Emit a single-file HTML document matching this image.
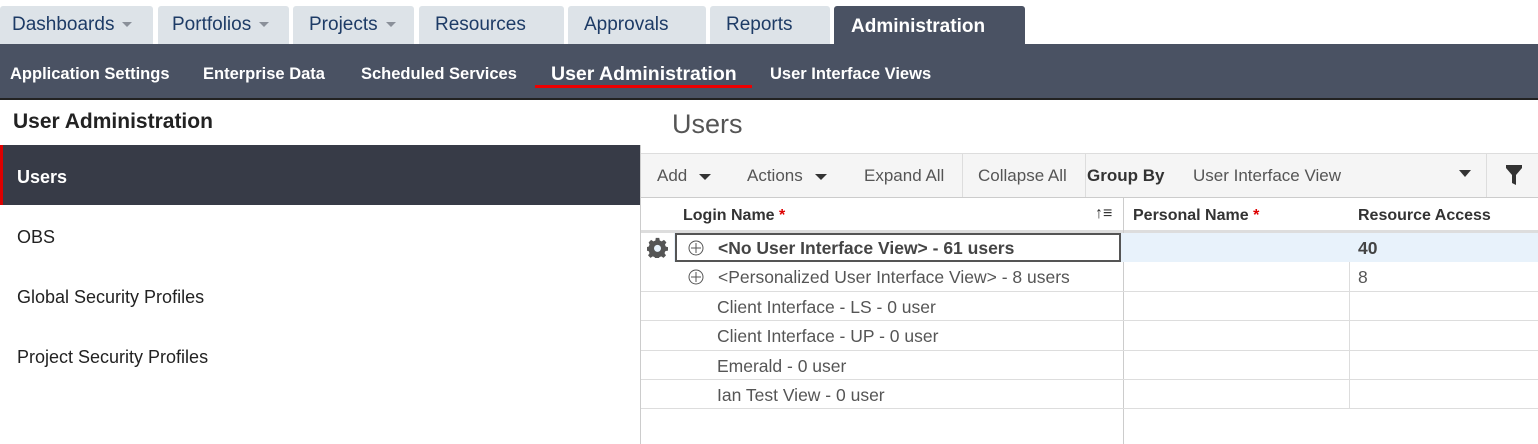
<!DOCTYPE html>
<html><head><style>
*{margin:0;padding:0;box-sizing:border-box}
body{width:1538px;height:444px;overflow:hidden;background:#fff;font-family:"Liberation Sans",sans-serif;position:relative}
.a{position:absolute}
.tab{position:absolute;top:6px;height:38px;background:#dde3e8;color:#1d3b66;font-size:19px;padding:8px 0 0 12px;border-radius:3px 3px 0 0}
.car{display:inline-block;width:0;height:0;border-left:5px solid transparent;border-right:5px solid transparent;border-top:5px solid #8a9099;margin-left:8px;vertical-align:middle}
.nav{position:absolute;top:44px;left:0;width:1538px;height:56px;background:#4a5263;border-bottom:2px solid #222}
.nav span{position:absolute;top:21px;color:#fff;font-weight:bold;font-size:16.5px}
.lrow{position:absolute;left:0;width:640px;height:60px;font-size:18px;color:#222;padding:22px 0 0 17px}
.cell{position:absolute;font-size:16px;color:#555}
.r{font-size:17.5px}
.hl{position:absolute;height:1px;background:#ddd}
</style></head><body>
<div class="tab" style="left:0;width:153px">Dashboards<span class="car"></span></div>
<div class="tab" style="left:158px;width:131px;padding-left:14px">Portfolios<span class="car"></span></div>
<div class="tab" style="left:293px;width:121px;padding-left:16px">Projects<span class="car"></span></div>
<div class="tab" style="left:419px;width:145px;padding-left:16px">Resources</div>
<div class="tab" style="left:568px;width:138px;padding-left:16px">Approvals</div>
<div class="tab" style="left:710px;width:120px;padding-left:16px">Reports</div>
<div class="tab" style="left:834px;width:191px;background:#4a5263;color:#fff;font-weight:bold;padding-left:17px;padding-top:10px">Administration</div>
<div class="nav">
<span style="left:10px">Application Settings</span>
<span style="left:203px">Enterprise Data</span>
<span style="left:361px">Scheduled Services</span>
<span style="left:551px;top:19px;font-size:19.5px">User Administration</span>
<div class="a" style="left:535px;top:41px;width:217px;height:3px;background:#e00"></div>
<span style="left:770px">User Interface Views</span>
</div>
<div class="a" style="left:13px;top:110px;font-size:21px;font-weight:bold;color:#222">User Administration</div>
<div class="lrow" style="top:145px;background:#373b47;color:#fff;font-weight:bold;border-left:3px solid #d00;padding-left:14px">Users</div>
<div class="lrow" style="top:205px">OBS</div>
<div class="lrow" style="top:265px">Global Security Profiles</div>
<div class="lrow" style="top:325px">Project Security Profiles</div>
<div class="a" style="left:640px;top:145px;width:1px;height:299px;background:#ccc"></div>
<div class="a" style="left:672px;top:109px;font-size:27px;color:#555">Users</div>
<div class="a" style="left:641px;top:153px;width:897px;height:45px;background:#f5f5f5;border-top:1px solid #ddd;border-bottom:1px solid #ccc"></div>
<div class="cell" style="left:657px;top:166px;font-size:17px">Add<span class="car" style="border-top-color:#333;border-width:6px 6px 0;margin-left:12px"></span></div>
<div class="cell" style="left:747px;top:166px;font-size:17px">Actions<span class="car" style="border-top-color:#333;border-width:6px 6px 0;margin-left:12px"></span></div>
<div class="cell" style="left:864px;top:166px;font-size:17px">Expand All</div>
<div class="a" style="left:962px;top:154px;width:1px;height:43px;background:#ddd"></div>
<div class="cell" style="left:978px;top:166px;font-size:17px">Collapse All</div>
<div class="a" style="left:1085px;top:154px;width:1px;height:43px;background:#ddd"></div>
<div class="cell" style="left:1087px;top:166px;font-size:17px;font-weight:bold;color:#333">Group By</div>
<div class="cell" style="left:1193px;top:166px;font-size:17px">User Interface View</div>
<div class="a" style="left:1459px;top:170px;border-left:6px solid transparent;border-right:6px solid transparent;border-top:7px solid #333"></div>
<div class="a" style="left:1486px;top:154px;width:1px;height:43px;background:#ddd"></div>
<svg class="a" style="left:1505px;top:164px" width="18" height="22"><path d="M1 1h16v3l-6 7v10l-4-2v-8l-6-7z" fill="#333"/></svg>
<div class="cell" style="left:683px;top:207px;font-weight:bold;color:#333">Login Name <span style="color:#d00">*</span></div>
<div class="cell" style="left:1095px;top:205px;color:#333">↑≡</div>
<div class="cell" style="left:1133px;top:207px;font-weight:bold;color:#333">Personal Name <span style="color:#d00">*</span></div>
<div class="cell" style="left:1358px;top:207px;font-weight:bold;color:#333">Resource Access</div>
<div class="a" style="left:641px;top:230px;width:897px;height:3px;background:#ddd"></div>
<div class="a" style="left:1123px;top:198px;width:1px;height:246px;background:#ccc"></div>
<div class="a" style="left:1349px;top:233px;width:1px;height:176px;background:#ddd"></div>
<div class="a" style="left:641px;top:233px;width:897px;height:29px;background:#e8f2fb"></div>
<div class="a" style="left:641px;top:233px;width:33px;height:29px;background:#fff"></div>
<div class="a" style="left:675px;top:233px;width:446px;height:29px;border:2px solid #555;background:#fff"></div>
<svg class="a" style="left:647px;top:237px" width="21" height="21" viewBox="0 0 24 24"><path fill="#555" d="M10 1h4l.6 3 2.2 1 2.6-1.7 2.8 2.8L20.5 8.7l1 2.3 2.5.6v4l-3 .5-1 2.3 1.7 2.6-2.8 2.8-2.6-1.7-2.3 1-.6 3h-4l-.5-3-2.3-1-2.6 1.7-2.8-2.8 1.7-2.6-1-2.3-3-.5v-4l3-.6 1-2.3L1.9 6.1l2.8-2.8 2.6 1.7 2.3-1z"/><circle cx="12" cy="13" r="4" fill="#e8f2fb"/></svg>
<svg class="a" style="left:688px;top:240px" width="16" height="16"><circle cx="8" cy="8" r="7" fill="none" stroke="#555"/><path d="M8 3v10M3 8h10" stroke="#555"/></svg>
<div class="cell r" style="left:718px;top:238px;font-weight:bold;color:#444">&lt;No User Interface View&gt; - 61 users</div>
<div class="cell r" style="left:1358px;top:238px;font-weight:bold;color:#444">40</div>
<svg class="a" style="left:688px;top:269px" width="16" height="16"><circle cx="8" cy="8" r="7" fill="none" stroke="#555"/><path d="M8 3v10M3 8h10" stroke="#555"/></svg>
<div class="cell r" style="left:718px;top:267px">&lt;Personalized User Interface View&gt; - 8 users</div>
<div class="cell r" style="left:1358px;top:267px">8</div>
<div class="hl" style="left:641px;top:291px;width:897px"></div>
<div class="cell r" style="left:717px;top:297px">Client Interface - LS - 0 user</div>
<div class="hl" style="left:641px;top:320px;width:897px"></div>
<div class="cell r" style="left:717px;top:326px">Client Interface - UP - 0 user</div>
<div class="hl" style="left:641px;top:350px;width:897px"></div>
<div class="cell r" style="left:717px;top:356px">Emerald - 0 user</div>
<div class="hl" style="left:641px;top:379px;width:897px"></div>
<div class="cell r" style="left:717px;top:385px">Ian Test View - 0 user</div>
<div class="hl" style="left:641px;top:408px;width:897px"></div>
</body></html>
